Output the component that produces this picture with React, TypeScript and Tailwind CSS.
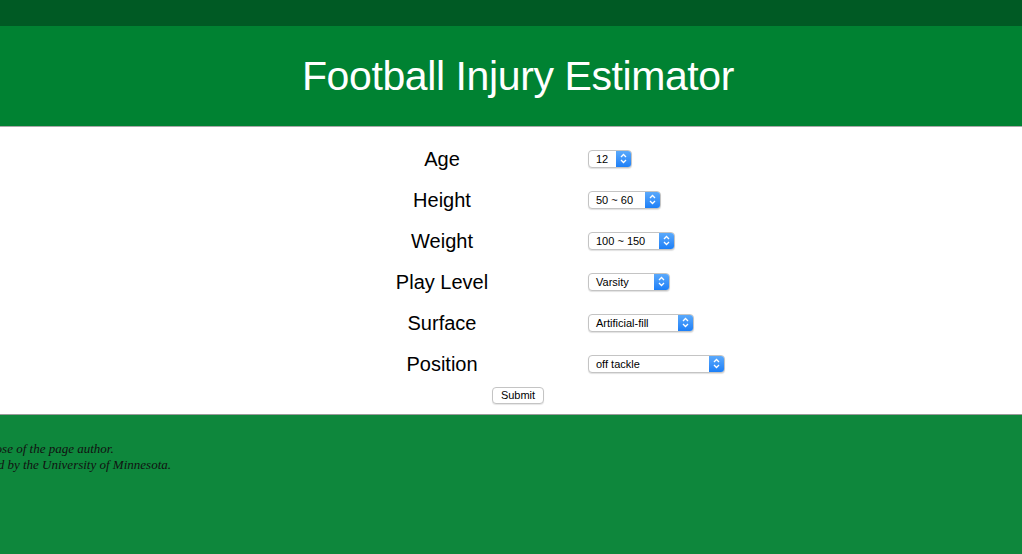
import React from "react";

const rows: { label: string; value: string; width: string }[] = [
  { label: "Age", value: "12", width: "w-[44px]" },
  { label: "Height", value: "50 ~ 60", width: "w-[73px]" },
  { label: "Weight", value: "100 ~ 150", width: "w-[87px]" },
  { label: "Play Level", value: "Varsity", width: "w-[82px]" },
  { label: "Surface", value: "Artificial-fill", width: "w-[106px]" },
  { label: "Position", value: "off tackle", width: "w-[137px]" },
];

function FakeSelect({ value, width }: { value: string; width: string }) {
  return (
    <div
      className={`${width} h-[18px] flex items-stretch rounded-[4px] border border-[#c4c4c4] bg-white shadow-[0_1px_1px_rgba(0,0,0,0.12)] overflow-hidden`}
    >
      <span className="flex-1 pl-[7px] text-[11px] leading-[16px] text-black whitespace-nowrap font-['Liberation_Sans',sans-serif]">
        {value}
      </span>
      <span className="w-[15px] flex items-center justify-center bg-gradient-to-b from-[#5aa9fb] to-[#1b7ff7]">
        <svg width="7" height="11" viewBox="0 0 7 11" fill="none">
          <path d="M1 4 L3.5 1.5 L6 4" stroke="white" strokeWidth="1.3" />
          <path d="M1 7 L3.5 9.5 L6 7" stroke="white" strokeWidth="1.3" />
        </svg>
      </span>
    </div>
  );
}

export default function App() {
  return (
    <div className="w-[1022px] h-[554px] flex flex-col bg-white font-['Liberation_Sans',Arial,sans-serif] overflow-hidden">
      <div className="h-[26px] bg-[#005a24]" />
      <div className="h-[100px] bg-[#008232] flex items-center justify-center pl-[14px]">
        <h1 className="text-[41px] font-light text-white tracking-[-0.4px] pt-[2px] font-['Liberation_Sans',sans-serif]">
          Football Injury Estimator
        </h1>
      </div>
      <div className="h-[1px] bg-[#a9a9a9]" />

      <div className="flex-none pt-[11px]">
        <div className="mx-auto w-[338px]">
          {rows.map((r) => (
            <div key={r.label} className="grid grid-cols-[200px_1fr] h-[41px] items-center">
              <div className="text-center text-[20px] text-black">{r.label}</div>
              <div className="pl-[46px]">
                <FakeSelect value={r.value} width={r.width} />
              </div>
            </div>
          ))}
        </div>
        <div className="flex justify-center pl-[14px] pt-[3px] pb-[10px]">
          <button className="h-[17px] w-[52px] rounded-[4px] border border-[#c4c4c4] bg-white text-[11px] leading-[15px] text-black shadow-[0_1px_1px_rgba(0,0,0,0.1)]">
            Submit
          </button>
        </div>
      </div>

      <div className="h-[1px] bg-[#9a9a9a]" />
      <div className="flex-1 bg-[#0e873c] pt-[26px]">
        <div className="w-[171px] flex justify-end">
          <div className="whitespace-nowrap italic text-[13px] leading-[16px] text-[#111] font-['Liberation_Serif',serif]">
            <div>The views and opinions expressed in this page are strictly those of the page author.</div>
            <div>The contents of this page have not been reviewed or approved by the University of Minnesota.</div>
          </div>
        </div>
      </div>
    </div>
  );
}
